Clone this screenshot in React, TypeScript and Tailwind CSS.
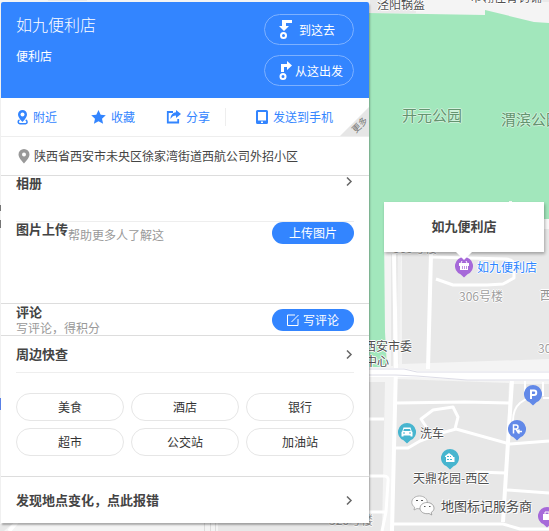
import type { ReactNode } from "react"

const nearbyItems = ["美食", "酒店", "银行", "超市", "公交站", "加油站"]

const halo =
  "[text-shadow:1px_0_#fff,-1px_0_#fff,0_1px_#fff,0_-1px_#fff]"
const greenHalo =
  "[text-shadow:1px_0_#d0f2dc,-1px_0_#d0f2dc,0_1px_#d0f2dc,0_-1px_#d0f2dc]"

function Marker({ color, children }: { color: string; children: ReactNode }) {
  return (
    <svg width="18" height="21" viewBox="0 0 18 21" aria-hidden="true">
      <path d="M9 0a9 9 0 0 1 3.500 17.300L9 20.500l-3.500-3.200A9 9 0 0 1 9 0z" fill={color} />
      {children}
    </svg>
  )
}

function MapCanvas() {
  return (
    <svg className="absolute top-0 left-0" width="549" height="531" viewBox="0 0 549 531" aria-hidden="true">
      <rect width="549" height="531" fill="#f4f4f4" />
      <path d="M48 0h39v1H48zM370 0h46v13h-46zM520 0h29v2h-29z" fill="#e9e9e9" />
      <path d="M0 398h1v12H0z" fill="#5b83ea" />
      <path d="M0 205h1v6H0zM0 220h1v8H0z" fill="#777" />
      <path d="M368 13l117 2v-5l49 12 15 1v197H384v12l1 100 2 35h-19z" fill="#a2e7bc" />
      <path d="M509 201h3v6h-3zM384 219h165v10H384z" fill="#f8f8f8" />
      <path d="M402 229h147v130l-147 5z" fill="#e8e8e8" />
      <path d="M396 254h5l-2 110h-5z" fill="#f0f0f0" />
      {/* blocks south of the main road */}
      <path d="M368 382h17l-3 149h-14zM397 379l112 4-5 148H392zM513 384h36v147h-47z" fill="#e7e7e7" />
      <path d="M0 524h12L4 531H0zM218 522h151v9H218z" fill="#e8e8e8" />
      <g fill="none" stroke="#dcdcdc" strokeWidth="1">
        <path d="M392 254v112M397 254l-1 110M204.500 522v9M210.500 522v9M215.500 522v9" />
      </g>
      <g fill="none" stroke="#fff" strokeWidth="4" strokeLinejoin="round">
        <path d="M394 254l2 112-4 165M431 254l-3 115" />
        <path d="M432 257l74 2q8 1 8 6v13l-11 6-16 1h-34l-17-6" strokeWidth="3" />
        <path d="M512 381l-4 61-5 80" />
        <path d="M397 403l68-1 44 1M395 448h13l12-7 18-7 18-5 54 15 39-3" strokeWidth="3" />
        <path d="M427 428l-6-9 12-9 20-3 5 10-3 12" strokeWidth="3" />
        <path d="M513 421q0-12 7-18l6-4M525 380v14M543 382v14M543 398h6" strokeWidth="2" />
        <path d="M368 419h16M366 476h18q5 0 4 6l-2 30-4 19M368 512h17M475 472l31 1M507 490l42 3M393 524h110l17 5h29" strokeWidth="3" />
        <path d="M9 531l8-9" />
      </g>
      <path d="M368 368h35l14 3h132v10l-85-1-47-3h-49z" fill="#fff" />
      <g fill="none" stroke="#dcdce6" strokeWidth="1">
        <path d="M368 369h36l13 3h132M368 375h27l22 1 50 4h82" />
      </g>
    </svg>
  )
}

function MapLabels() {
  return (
    <div className={`text-xs leading-[15px] whitespace-nowrap text-[#505050] ${halo}`}>
      <span className="absolute -top-[4px] left-[377px]">泾阳锅盔</span>
      <span className="absolute -top-[11px] left-[470px]">市翎佳青钓铺</span>
      <span className={`absolute top-[105px] left-[402px] text-[15px] leading-5 text-[#64936f] ${greenHalo}`}>开元公园</span>
      <span className={`absolute top-[109px] left-[501px] text-[15px] leading-5 text-[#64936f] ${greenHalo}`}>渭滨公园</span>
      <span className="absolute top-[240px] left-[393px] text-[#a0a0a0]">305号楼</span>
      <span className="absolute top-[288px] left-[459px] text-[#a0a0a0]">306号楼</span>
      <span className="absolute top-[287px] left-[540px] text-[#909090]">西区</span>
      <span className="absolute top-[340px] left-[538px] text-[#a0a0a0]">307号楼</span>
      <span className="absolute top-[338px] left-[364px]">西安市委</span>
      <span className="absolute top-[353px] left-[365px]">中心</span>
      <span className="absolute top-[425px] left-[420px]">洗车</span>
      <span className="absolute top-[470px] left-[413px]">天鼎花园-西区</span>
      <span className="absolute top-[512px] left-[329px] text-[#a0a0a0]">326号楼</span>
      <span className="absolute top-[259px] left-[477px] text-[#2d85ff]">如九便利店</span>
    </div>
  )
}

function MapMarkers() {
  return (
    <>
      <div className="absolute top-[257px] left-[455px]">
        <Marker color="#a669d9">
          <path d="M4 6h10v3H4zM5 9h8v4H5z" fill="#fff" />
          <path d="M6 6l1-2M12 6l-1-2" stroke="#fff" />
          <path d="M7.500 9v3M9.500 9v3M11.500 9v3" stroke="#a669d9" strokeWidth=".7" />
        </Marker>
      </div>
      <div className="absolute top-[385px] left-[524px]">
        <Marker color="#6289e8">
          <path d="M7 14V5.500h3a2.200 2.200 0 0 1 0 4.500H7" fill="none" stroke="#fff" strokeWidth="2" />
        </Marker>
      </div>
      <div className="absolute top-[420px] left-[508px]">
        <Marker color="#6289e8">
          <path d="M5.500 13.500V5h2.500a2 2 0 0 1 0 4H5.500M8 9l2.500 4M14 11.500H9.500m2-2l-2 2 2 2" fill="none" stroke="#fff" strokeWidth="1.500" />
        </Marker>
      </div>
      <div className="absolute top-[423px] left-[398px]">
        <Marker color="#47b5cf">
          <path d="M5.500 4.500h7l1.200 3.700.8.800v4.500h-2v-1h-7v1h-2V9l.8-.8z" fill="#fff" />
          <path d="M6 6h6l.7 2H5.300zM5 9.500h2v1H5zM11 9.500h2v1h-2z" fill="#47b5cf" />
        </Marker>
      </div>
      <div className="absolute top-[449px] left-[441px]">
        <Marker color="#47b5cf">
          <path d="M4 7l4-3 4 3v1h1.500v5H5V8H4z" fill="#fff" />
          <path d="M6 7h2v1H6zM6 10h2v1H6zM9 10h2v1H9zM9 7h1v1H9z" fill="#47b5cf" />
        </Marker>
      </div>
      <div className="absolute top-[507px] left-[538px]">
        <Marker color="#a669d9">
          <path d="M5 7h8v6H5z" fill="#fff" />
          <path d="M7 7V5h4v2" fill="none" stroke="#fff" />
        </Marker>
      </div>
    </>
  )
}

function InfoWindow() {
  return (
    <div className="absolute top-[202px] left-[384px] flex h-[50px] w-40 items-center justify-center bg-white pb-0.5 text-[13px] font-bold text-[#444] shadow-[1px_2px_3px_rgba(0,0,0,0.3)]">
      如九便利店
      <svg className="absolute top-full left-[72px]" width="16" height="8" viewBox="0 0 16 8" aria-hidden="true">
        <path d="M0 0h16L8 8z" fill="#fff" />
      </svg>
    </div>
  )
}

function Watermark() {
  return (
    <div className="absolute top-[495px] left-[411px] flex items-center gap-[6px] text-[13px] leading-5 whitespace-nowrap text-[#4c4c4c] [text-shadow:1px_1px_#fff,-1px_-1px_#fff]">
      <svg width="24" height="21" viewBox="0 0 24 21" aria-hidden="true">
        <path d="M8.500 1C4 1 .8 3.800.8 7.300c0 2 1 3.700 2.800 4.900L3 15l3-1.500c5 1.200 10.300-1.500 10.300-6.200C16.300 3.800 13 1 8.500 1z" fill="#fdfdfd" stroke="#999" strokeWidth=".7" />
        <path d="M16 7.500c-4 0-7 2.500-7 5.700s3.500 6.300 9 5.300l2.800 1.500-.6-2.500c1.800-1.200 2.800-2.600 2.800-4.300 0-3.200-3-5.700-7-5.700z" fill="#fdfdfd" stroke="#888" strokeWidth=".7" />
        <path d="M5 5h2v1H5zM10 5h2v1h-2zM13 11h1.500v1H13zM18 11h1.500v1H18z" fill="#555" />
      </svg>
      地图标记服务商
    </div>
  )
}

function Chevron() {
  return (
    <svg width="8" height="11" viewBox="0 0 8 11" fill="none" stroke="#666" strokeWidth="1.500" aria-hidden="true">
      <path d="M2 1.500l4 4-4 4" />
    </svg>
  )
}

function PlaceHeader() {
  return (
    <header className="flex h-24 justify-between rounded-t-xs bg-[#3385ff] px-[15px] text-white">
      <div className="pt-2.5">
        <h1 className="text-base leading-6 font-light">如九便利店</h1>
        <p className="mt-2.5 text-xs leading-5">便利店</p>
      </div>
      <div className="flex flex-col gap-[10px] pt-3">
        <button className="flex h-[31px] w-[90px] items-center gap-[5px] rounded-full border border-[#7db1ff] pl-[14px] text-xs">
          <svg width="15" height="21" viewBox="0 0 15 21" aria-hidden="true">
            <path d="M3 1h10v3H7v3h3l-5 5-5-5h3z" fill="#fff" />
            <circle cx="4.500" cy="16.500" r="2.500" fill="none" stroke="#fff" strokeWidth="2" />
          </svg>
          到这去
        </button>
        <button className="flex h-[31px] w-[90px] items-center gap-px rounded-full border border-[#7db1ff] pl-[14px] text-xs">
          <svg width="15" height="21" viewBox="0 0 15 21" aria-hidden="true">
            <path d="M2 12V4h6V1l5 4.500L8 10V7H5v5z" fill="#fff" />
            <circle cx="4" cy="16.500" r="2.500" fill="none" stroke="#fff" strokeWidth="2" />
          </svg>
          从这出发
        </button>
      </div>
    </header>
  )
}

function ActionBar() {
  return (
    <div className="relative flex h-[39px] items-center border-b border-[#eee] pl-[15px] text-xs text-[#3385ff]">
      <button className="flex w-[75px] items-center gap-1">
        <svg width="13" height="15" viewBox="0 0 13 15" aria-hidden="true">
          <path d="M3.500 10C1.500 11 1.800 13.500 4 13.800h5.500c2-.3 2.200-2.800.2-3.800" fill="none" stroke="#3385ff" strokeWidth="1.500" />
          <path d="M6.500 0a4.500 4.500 0 0 1 4.500 4.500c0 3-4.500 7.500-4.500 7.500S2 7.500 2 4.500A4.500 4.500 0 0 1 6.500 0z" fill="#3385ff" />
          <circle cx="6.500" cy="4.500" r="2" fill="#fff" />
        </svg>
        附近
      </button>
      <button className="flex w-[75px] items-center gap-[5px]">
        <svg width="15" height="14" viewBox="0 0 15 14" aria-hidden="true">
          <path d="M7.500 0l2.200 4.700 5.100.6-3.800 3.400 1.100 5.100-4.600-2.600-4.600 2.600 1.100-5.100L.2 5.300l5.100-.6z" fill="#3385ff" />
        </svg>
        收藏
      </button>
      <button className="flex w-[59px] items-center gap-[5px]">
        <svg width="15" height="14" viewBox="0 0 15 14" aria-hidden="true">
          <path d="M7 2H1.800v10.500h10.400V9" fill="none" stroke="#3385ff" strokeWidth="1.800" />
          <path d="M10 0l5 4-5 4V5.500C7.500 5.500 6 6.500 4.500 9 4.500 5 7 2.500 10 2.300z" fill="#3385ff" />
        </svg>
        分享
      </button>
      <button className="flex h-[18px] items-center gap-[5px] border-l border-[#eee] pl-[30px]">
        <svg width="12" height="15" viewBox="0 0 12 15" aria-hidden="true">
          <path d="M1.500 0h9Q12 0 12 1.500v11q0 1.500-1.500 1.500h-9Q0 14 0 12.500v-11Q0 0 1.500 0zM2 2v8.500h8V2zM5 11.500v1.500h2v-1.500z" fill="#3385ff" fillRule="evenodd" />
        </svg>
        发送到手机
      </button>
      <button className="absolute right-0 bottom-0 h-[29px] w-[29px] bg-[#e6e6e6] text-[9px] leading-3 text-[#777] [clip-path:polygon(100%_0,100%_100%,0_100%)]">
        <span className="absolute right-0 bottom-[5px] block -rotate-45">更多</span>
      </button>
    </div>
  )
}

export default function App() {
  return (
    <div className="relative min-h-screen overflow-hidden bg-[#f4f4f4] pt-0.5 pl-px font-['Noto_Sans_CJK_SC',sans-serif]">
      <MapCanvas />
      <MapLabels />
      <MapMarkers />
      <InfoWindow />
      <Watermark />
      <main className="relative w-full max-w-92 rounded-t-xs bg-white text-[#444] shadow-[1px_2px_2px_rgba(0,0,0,0.3)]">
        <PlaceHeader />
        <ActionBar />
        <address className="flex h-[39px] items-center gap-1 border-b border-[#ddd] pl-[17px] text-xs not-italic">
          <svg width="12" height="15" viewBox="0 0 12 15" aria-hidden="true">
            <path d="M6 0a5.500 5.500 0 0 1 5.500 5.500C11.500 9 6 14.500 6 14.500S.5 9 .5 5.500A5.500 5.500 0 0 1 6 0z" fill="#999" />
            <circle cx="6" cy="5.500" r="2" fill="#fff" />
          </svg>
          陕西省西安市未央区徐家湾街道西航公司外招小区
        </address>
        <section className="h-32 border-b border-[#ddd] px-[15px]">
          <div className="flex h-[46px] items-start justify-between border-b border-[#eee]">
            <h2 className="text-[13px] leading-3.5 font-bold">相册</h2>
            <button className="mr-px" aria-label="相册">
              <Chevron />
            </button>
          </div>
          <div className="flex items-start">
            <h2 className="text-[13px] leading-3.5 font-bold">图片上传</h2>
            <p className="pt-1.5 text-xs leading-3.5 text-[#999]">帮助更多人了解这</p>
            <button className="ml-auto h-[22px] w-[82px] rounded-full bg-[#3385ff] text-xs text-white">上传图片</button>
          </div>
        </section>
        <section className="flex h-8 items-center justify-between border-b border-[#ddd] px-[15px]">
          <div>
            <h2 className="text-[13px] leading-3.5 font-bold">评论</h2>
            <p className="pt-0.5 text-xs leading-3.5 text-[#999]">写评论，得积分</p>
          </div>
          <button className="flex h-[22px] w-[82px] items-center justify-center gap-1 rounded-full bg-[#3385ff] text-xs text-white">
            <svg width="12" height="12" viewBox="0 0 12 12" fill="none" stroke="#fff" aria-hidden="true">
              <path d="M8 1H.5v10.500H11V5M4.500 8l7-7" />
            </svg>
            写评论
          </button>
        </section>
        <section className="border-b border-[#ddd] px-[15px] pb-5">
          <div className="flex h-[37px] items-center justify-between border-b border-[#eee]">
            <h2 className="text-[13px] leading-4 font-bold">周边快查</h2>
            <button className="mr-px" aria-label="周边快查">
              <Chevron />
            </button>
          </div>
          <div className="mt-5 grid grid-cols-3 gap-[7px]">
            {nearbyItems.map((item) => (
              <button key={item} className="h-7 rounded-full border border-[#e6e6e6] text-xs text-[#333]">
                {item}
              </button>
            ))}
          </div>
        </section>
        <button className="flex h-[46px] w-full items-center justify-between pr-4 pl-[15px] text-[13px] font-bold">
          发现地点变化，点此报错
          <Chevron />
        </button>
      </main>
    </div>
  )
}
